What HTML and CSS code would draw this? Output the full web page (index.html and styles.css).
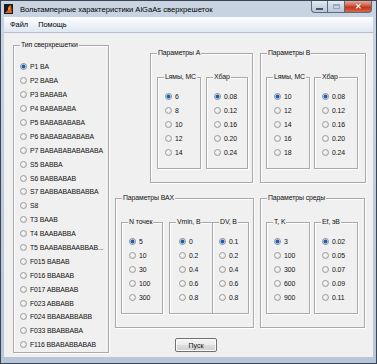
FILE: index.html
```html
<!DOCTYPE html>
<html lang="ru">
<head>
  <meta charset="UTF-8">
  <title>Вольтамперные характеристики AlGaAs сверхрешеток</title>
  <link rel="stylesheet" href="styles.css">
</head>
<body>
  <div class="window">
    <div class="titlebar">
      <svg class="app-icon" width="9" height="10" viewBox="0 0 9 10">
        <rect width="9" height="10" fill="#1a1a1a"/>
        <path d="M1 9 L4 6 L5 2 L7 1 L8 9 Z" fill="#e0601c"/>
        <path d="M4 6 L5 2 L6 5 Z" fill="#f5c040"/>
        <path d="M1 9 L3 7 L2 9 Z" fill="#3a7fd0"/>
      </svg>
      <span class="title">Вольтамперные характеристики AlGaAs сверхрешеток</span>
      <div class="controls">
        <span class="ctl min"><i></i></span>
        <span class="ctl max"><i></i></span>
        <span class="ctl close">✕</span>
      </div>
    </div>

    <div class="menubar">
      <span>Файл</span>
      <span>Помощь</span>
    </div>

    <div class="client">
      <div class="group types">
        <div class="group-title">Тип сверхрешетки</div>
        <ul class="options">
          <li><i class="radio on"></i>P1 BA</li>
          <li><i class="radio"></i>P2 BABA</li>
          <li><i class="radio"></i>P3 BABABA</li>
          <li><i class="radio"></i>P4 BABABABA</li>
          <li><i class="radio"></i>P5 BABABABABA</li>
          <li><i class="radio"></i>P6 BABABABABABA</li>
          <li><i class="radio"></i>P7 BABABABABABABA</li>
          <li><i class="radio"></i>S5 BABBA</li>
          <li><i class="radio"></i>S6 BABBABAB</li>
          <li><i class="radio"></i>S7 BABBABABBABBA</li>
          <li><i class="radio"></i>S8</li>
          <li><i class="radio"></i>T3 BAAB</li>
          <li><i class="radio"></i>T4 BAABABBA</li>
          <li><i class="radio"></i>T5 BAABABBAABBAB...</li>
          <li><i class="radio"></i>F015 BABAB</li>
          <li><i class="radio"></i>F016 BBABAB</li>
          <li><i class="radio"></i>F017 ABBABAB</li>
          <li><i class="radio"></i>F023 ABBABB</li>
          <li><i class="radio"></i>F024 BBABABBABB</li>
          <li><i class="radio"></i>F033 BBABBABA</li>
          <li><i class="radio"></i>F116 BBABABBABAB</li>
        </ul>
      </div>

      <div class="right">
        <div class="row top-row">
          <div class="group box params-a">
            <div class="group-title">Параметры A</div>
            <div class="subs">
              <div class="group sub w44">
                <div class="group-title">Lямы, МС</div>
                <ul class="options short">
                  <li><i class="radio on"></i>6</li>
                  <li><i class="radio"></i>8</li>
                  <li><i class="radio"></i>10</li>
                  <li><i class="radio"></i>12</li>
                  <li><i class="radio"></i>14</li>
                </ul>
              </div>
              <div class="group sub w42">
                <div class="group-title">Xбар</div>
                <ul class="options short">
                  <li><i class="radio on"></i>0.08</li>
                  <li><i class="radio"></i>0.12</li>
                  <li><i class="radio"></i>0.16</li>
                  <li><i class="radio"></i>0.20</li>
                  <li><i class="radio"></i>0.24</li>
                </ul>
              </div>
            </div>
          </div>

          <div class="group box params-b">
            <div class="group-title">Параметры B</div>
            <div class="subs">
              <div class="group sub w44">
                <div class="group-title">Lямы, МС</div>
                <ul class="options short">
                  <li><i class="radio on"></i>10</li>
                  <li><i class="radio"></i>12</li>
                  <li><i class="radio"></i>14</li>
                  <li><i class="radio"></i>16</li>
                  <li><i class="radio"></i>18</li>
                </ul>
              </div>
              <div class="group sub w44">
                <div class="group-title">Xбар</div>
                <ul class="options short">
                  <li><i class="radio on"></i>0.08</li>
                  <li><i class="radio"></i>0.12</li>
                  <li><i class="radio"></i>0.16</li>
                  <li><i class="radio"></i>0.20</li>
                  <li><i class="radio"></i>0.24</li>
                </ul>
              </div>
            </div>
          </div>
        </div>

        <div class="row bottom-row">
          <div class="group box params-vax">
            <div class="group-title">Параметры ВАХ</div>
            <div class="subs">
              <div class="group sub w42">
                <div class="group-title">N точек</div>
                <ul class="options short">
                  <li><i class="radio on"></i>5</li>
                  <li><i class="radio"></i>10</li>
                  <li><i class="radio"></i>30</li>
                  <li><i class="radio"></i>100</li>
                  <li><i class="radio"></i>300</li>
                </ul>
              </div>
              <div class="group sub w44 vmin">
                <div class="group-title">Vmin, В</div>
                <ul class="options short">
                  <li><i class="radio on"></i>0</li>
                  <li><i class="radio"></i>0.2</li>
                  <li><i class="radio"></i>0.4</li>
                  <li><i class="radio"></i>0.6</li>
                  <li><i class="radio"></i>0.8</li>
                </ul>
              </div>
              <div class="group sub dv">
                <div class="group-title">DV, В</div>
                <ul class="options short">
                  <li><i class="radio on"></i>0.1</li>
                  <li><i class="radio"></i>0.2</li>
                  <li><i class="radio"></i>0.4</li>
                  <li><i class="radio"></i>0.6</li>
                  <li><i class="radio"></i>0.8</li>
                </ul>
              </div>
            </div>
          </div>

          <div class="group box params-env">
            <div class="group-title">Параметры среды</div>
            <div class="subs">
              <div class="group sub w44">
                <div class="group-title">T, K</div>
                <ul class="options short">
                  <li><i class="radio on"></i>3</li>
                  <li><i class="radio"></i>100</li>
                  <li><i class="radio"></i>300</li>
                  <li><i class="radio"></i>600</li>
                  <li><i class="radio"></i>900</li>
                </ul>
              </div>
              <div class="group sub w44">
                <div class="group-title">Ef, эВ</div>
                <ul class="options short">
                  <li><i class="radio on"></i>0.02</li>
                  <li><i class="radio"></i>0.05</li>
                  <li><i class="radio"></i>0.07</li>
                  <li><i class="radio"></i>0.09</li>
                  <li><i class="radio"></i>0.11</li>
                </ul>
              </div>
            </div>
          </div>
        </div>

        <button class="run">Пуск</button>
      </div>
    </div>
  </div>
</body>
</html>
```

FILE: styles.css
```css
* { box-sizing: border-box; }
body { margin: 0; font-family: "Liberation Sans", Arial, sans-serif; font-size: 6.9px; letter-spacing: -0.1px; color: #111; background: #9aa8b8; }

.window { width: 377px; height: 364px; display: flex; flex-direction: column; padding: 0 3px 6px 3px; border: 1px solid #3c4652; background: linear-gradient(#c8d4e2, #bccadb 60%, #b7c6d8); }

.titlebar { height: 16px; margin: 0 -3px; display: flex; align-items: center; }
.app-icon { margin-left: 3px; flex: none; }
.title { margin-left: 7px; font-size: 7.6px; letter-spacing: 0; color: #000; white-space: nowrap; }
.controls { display: flex; align-self: flex-start; margin-left: auto; margin-right: 4px; }
.ctl { height: 12px; border: 1px solid #5d6b80; border-top: none; display: flex; align-items: center; justify-content: center; }
.min { width: 16px; border-radius: 0 0 0 4px; border-right: none; background: linear-gradient(#e4ebf3, #cad6e4 50%, #b9c8da); }
.min i { display: block; width: 7px; height: 2px; margin-top: 4px; background: #fff; border: 1px solid #4a5566; }
.max { width: 17px; background: linear-gradient(#e4ebf3, #cad6e4 50%, #b9c8da); border-right: none; }
.max i { display: block; width: 7px; height: 5px; border: 1px solid #7d8898; box-shadow: inset 0 1px #7d8898; opacity: 0.6; }
.close { width: 28px; border-radius: 0 0 4px 0; background: linear-gradient(#e9a99b, #d0583f 45%, #c0341b 55%, #d96a45); color: #fff; font-size: 8px; font-weight: bold; text-shadow: 0 0 1px #5a1a10; }

.menubar { height: 16px; display: flex; align-items: center; gap: 10px; padding-left: 6px; font-size: 7.4px; letter-spacing: 0; color: #000; background: linear-gradient(#fdfeff, #eef2f9 50%, #dfe7f3); border-bottom: 1px solid #b4bfcf; }

.client { flex: 1; display: flex; align-items: flex-start; background: #f0f0f0; }

.group { border: 1px solid #a9a9a9; box-shadow: inset 1px 1px #fff, 1px 1px #fff; }
.group-title { width: fit-content; margin: -6px 0 0 6px; padding: 0 1px; line-height: 10px; background: #f0f0f0; white-space: nowrap; }

.options { list-style: none; margin: 0; padding: 0 0 0 6px; }
.options li { display: flex; align-items: center; gap: 3px; height: 13.9px; white-space: nowrap; }
.types .options { margin-top: 10px; }
.options.short { margin-top: 7px; padding-left: 7px; }
.options.short li { height: 14.2px; }

.radio { flex: none; width: 7px; height: 7px; border-radius: 50%; border: 1px solid #9b9b9b; background: radial-gradient(circle at 40% 40%, #fdfdfd, #d9d9d9); }
.radio.on { border-color: #7e8c9c; background: radial-gradient(circle, #1f5fae 0 1.4px, #5d93d3 1.9px, #eaf0f6 2.3px); }

.types { margin: 12px 0 0 9px; width: 96px; height: 308px; }

.right { margin-left: 6px; display: flex; flex-direction: column; align-items: flex-start; }
.row { display: flex; }
.top-row { margin-top: 20px; padding-left: 35px; gap: 7px; }
.bottom-row { margin-top: 15px; gap: 6px; }

.box { height: 130px; }
.params-a { width: 103px; }
.params-b { width: 106px; }
.params-vax { width: 139px; }
.params-env { width: 105px; }

.subs { display: flex; margin: 19px 0 0 5px; gap: 4px; }
.params-a .subs { margin-left: 6px; gap: 5px; }
.params-vax .subs { gap: 6px; }

.sub { height: 92px; }
.w44 { width: 44px; }
.w42 { width: 42px; }
.dv { width: 37px; margin-left: -7px; }
.dv .options.short { padding-left: 6px; }
.vmin .options.short { padding-left: 9px; }

.run { margin: 10px 0 0 60px; width: 42px; height: 14px; padding: 0; font-family: inherit; font-size: 7px; color: #111; border: 1px solid #707070; border-radius: 2px; background: linear-gradient(#f4f4f4, #ececec 45%, #dcdcdc 55%, #d0d0d0); box-shadow: inset 0 0 0 1px #fcfcfc; }
```
